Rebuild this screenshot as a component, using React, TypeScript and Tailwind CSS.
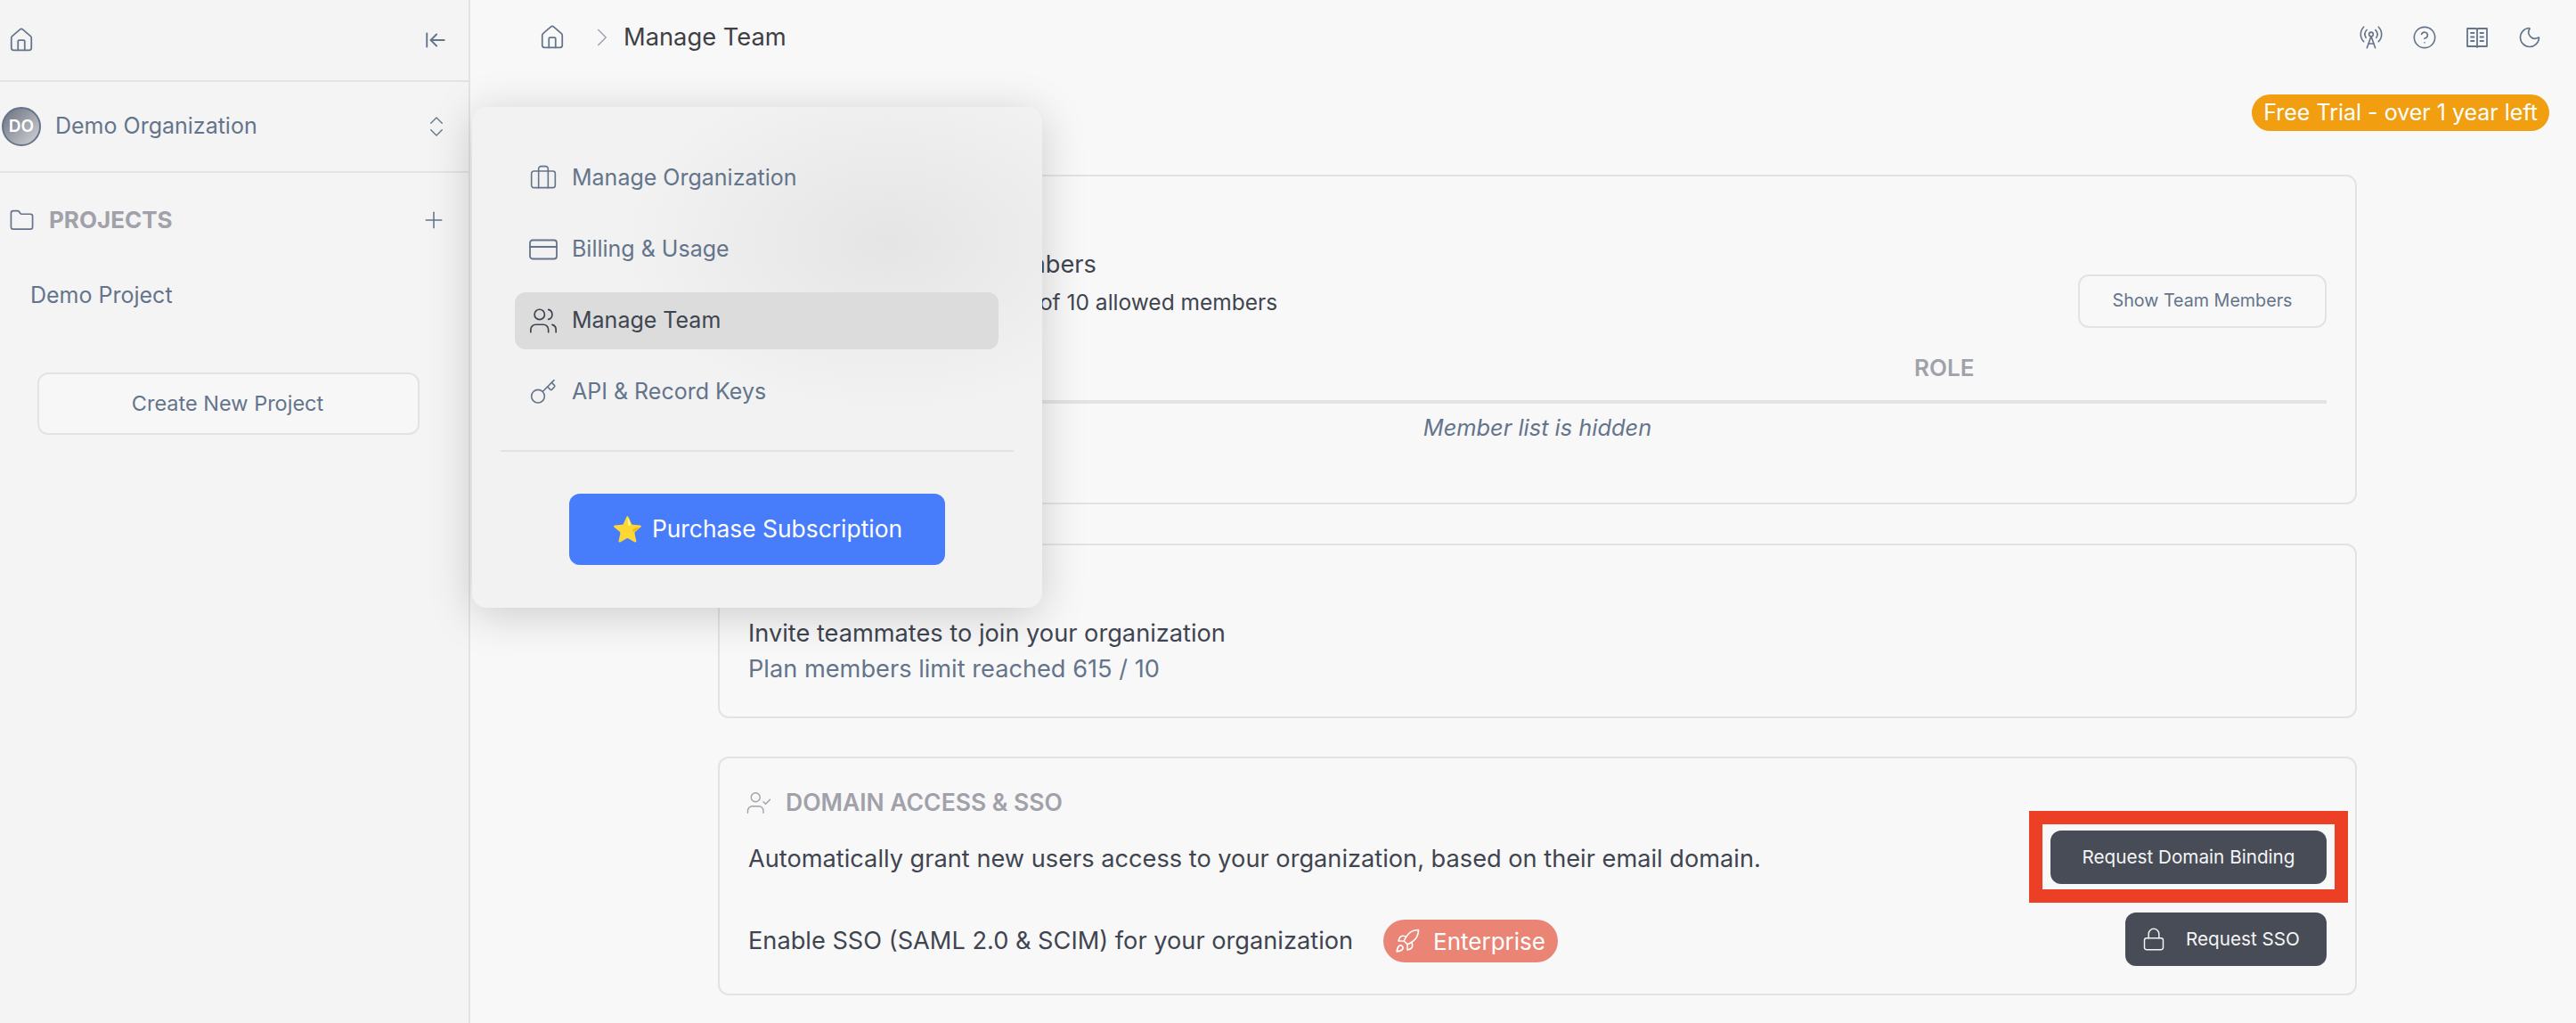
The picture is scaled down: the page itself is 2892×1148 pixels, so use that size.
import React from "react";
import {
  ArrowLeftToLine,
  Briefcase,
  ChevronRight,
  ChevronsUpDown,
  CircleHelp,
  CreditCard,
  Folder,
  Home,
  Key,
  Lock,
  Moon,
  Plus,
  RadioTower,
  Rocket,
  UserCheck,
  UserPlus,
  Users,
} from "lucide-react";

const menuItems = [
  { label: "Manage Organization", icon: Briefcase, size: 32 },
  { label: "Billing & Usage", icon: CreditCard, size: 36 },
  { label: "Manage Team", icon: Users, size: 34, active: true },
  { label: "API & Record Keys", icon: Key, size: 32 },
];

const Sidebar = () => (
  <aside className="flex h-full w-[528px] shrink-0 flex-col border-r-2 border-[#e3e3e4] bg-[#f4f4f5] text-[#64748b]">
    <div className="flex h-[92px] items-center justify-between border-b-2 border-[#e3e3e4] pl-[9px] pr-[24px]">
      <Home size={30} strokeWidth={1.4} />
      <ArrowLeftToLine size={26} strokeWidth={1.75} />
    </div>
    <div className="flex h-[102px] items-center border-b-2 border-[#e3e3e4] pl-[2px] pr-[21px]">
      <div className="flex h-[44px] w-[44px] items-center justify-center rounded-full border-2 border-[#64748b] bg-gradient-to-br from-[#6b7280] to-[#d4d4d8] text-[19px] font-semibold text-white">
        DO
      </div>
      <span className="ml-[16px] text-[25px]">Demo Organization</span>
      <ChevronsUpDown size={30} strokeWidth={1.1} className="ml-auto" />
    </div>
    <div className="flex items-center justify-between pl-[10px] pr-[24px] pt-[37px]">
      <div className="flex items-center gap-[16px]">
        <Folder size={29} strokeWidth={1.4} />
        <span className="text-[26px] font-bold leading-[32px] text-[#a1a1aa]">PROJECTS</span>
      </div>
      <Plus size={30} strokeWidth={1.25} />
    </div>
    <div className="pl-[34px] pt-[49px] text-[25px] leading-[38px]">Demo Project</div>
    <button className="ml-[42px] mt-[68px] h-[70px] w-[429px] rounded-[12px] border-2 border-[#e3e3e4] bg-[#f7f7f8] pr-[2px] text-[23.5px]">
      Create New Project
    </button>
  </aside>
);

const BookIcon = () => (
  <svg width="26" height="26" viewBox="0 0 26 26" fill="none" stroke="currentColor" strokeWidth="1.8" strokeLinecap="round" strokeLinejoin="round">
    <path d="M2 3h9.5c.8 0 1.5.6 1.5 1.4 0-.8.7-1.4 1.5-1.4H24v20h-9.5c-.8 0-1.5.4-1.5 1 0-.6-.7-1-1.5-1H2z" />
    <path d="M13 4.5V23" />
    <path d="M6 8h3.5M6 12.5h3.5M6 17h3.5M16.5 8H20M16.5 12.5H20M16.5 17H20" />
  </svg>
);

const TopBar = () => (
  <header className="flex h-[84px] items-center justify-between pl-[77px] pr-[38px]">
    <div className="flex items-center text-[#64748b]">
      <Home size={30} strokeWidth={1.4} />
      <ChevronRight size={34} strokeWidth={1} className="ml-[24px] text-[#9ca3af]" />
      <span className="ml-[7px] text-[27.3px] text-[#3f3f46]">Manage Team</span>
    </div>
    <div className="flex items-center gap-[32px] text-[#64748b]">
      <RadioTower size={28} strokeWidth={1.4} />
      <CircleHelp size={28} strokeWidth={1.4} />
      <BookIcon />
      <Moon size={28} strokeWidth={1.4} />
    </div>
  </header>
);

const Card = ({ className, children }: { className?: string; children: React.ReactNode }) => (
  <section className={`rounded-[12px] border-2 border-[#e3e3e4] px-[32px] ${className ?? ""}`}>{children}</section>
);

const CardTitle = ({ icon: Icon, children }: { icon: typeof Users; children: React.ReactNode }) => (
  <div className="flex h-[36px] items-center gap-[15px] text-[#a1a1aa]">
    <Icon size={30} strokeWidth={1.1} className="-ml-[3px]" />
    <span className="text-[26.5px] font-semibold">{children}</span>
  </div>
);

const DarkButton = ({ children, className }: { children: React.ReactNode; className?: string }) => (
  <button className={`flex h-[60px] shrink-0 items-center rounded-[12px] bg-[#474c57] text-[20.7px] text-[#f4f4f5] ${className ?? ""}`}>
    {children}
  </button>
);

const Main = () => (
  <main className="flex h-full min-w-0 flex-1 flex-col bg-[#f8f8f8]">
    <TopBar />
    <div className="flex justify-end pr-[30px] pt-[22px]">
      <span className="flex h-[41px] items-center rounded-full bg-[#f19e10] px-[13px] text-[25px] text-white">
        Free Trial - over 1 year left
      </span>
    </div>
    <div className="ml-[278px] mt-[49px] flex w-[1840px] flex-col gap-[44px]">
      <Card className="h-[370px] pt-[30px]">
        <CardTitle icon={Users}>TEAM MEMBERS</CardTitle>
        <div className="mt-[12px] flex items-end justify-between">
          <div className="pb-[8px] text-[#3f4550]">
            <p className="text-[27.2px] leading-[42px]">Manage your team's members</p>
            <p className="text-[24.5px] leading-[42px]">Your organization holds 615 of 10 allowed members</p>
          </div>
          <button className="h-[60px] w-[279px] rounded-[12px] border-2 border-[#e3e3e4] text-[19.7px] text-[#64748b]">
            Show Team Members
          </button>
        </div>
        <div className="flex h-[85px] items-center border-b-4 border-[#e3e3e4] pt-[7px] text-[26px] font-semibold text-[#a1a1aa]">
          <span className="w-[1309px]">USER</span>
          <span>ROLE</span>
        </div>
        <p className="pt-[2px] text-center text-[25.4px] leading-[50px] italic text-[#64748b]">Member list is hidden</p>
      </Card>
      <Card className="h-[196px] pt-[30px]">
        <CardTitle icon={UserPlus}>INVITE</CardTitle>
        <div className="mt-[13px] text-[27.2px] leading-[40px]">
          <p className="text-[#3f4550]">Invite teammates to join your organization</p>
          <p className="text-[#64748b]">Plan members limit reached 615 / 10</p>
        </div>
      </Card>
      <Card className="relative -mt-px h-[268px] pt-[32px]">
        <CardTitle icon={UserCheck}>DOMAIN ACCESS &amp; SSO</CardTitle>
        <div className="mt-[13px] flex items-center justify-between">
          <p className="pt-[4px] text-[27.2px] text-[#3f4550]">
            Automatically grant new users access to your organization, based on their email domain.
          </p>
          <DarkButton className="w-[310px] justify-center">Request Domain Binding</DarkButton>
        </div>
        <div className="mt-[32px] flex items-center justify-between">
          <div className="flex items-center pt-[4px]">
            <span className="text-[27.2px] text-[#3f4550]">Enable SSO (SAML 2.0 &amp; SCIM) for your organization</span>
            <span className="ml-[34px] flex h-[48px] items-center gap-[14px] rounded-full bg-[#ea8576] pl-[12px] pr-[14px] text-[26px] text-white">
              <Rocket size={30} strokeWidth={1.25} />
              Enterprise
            </span>
          </div>
          <DarkButton className="w-[226px] pl-[18px]">
            <Lock size={28} strokeWidth={1.25} />
            <span className="ml-[22px]">Request SSO</span>
          </DarkButton>
        </div>
        {/* annotation box from the screenshot */}
        <div className="pointer-events-none absolute left-[1470px] top-[59px] h-[103px] w-[358px] border-[15px] border-[#ec4026]" />
      </Card>
    </div>
  </main>
);

const Popover = () => (
  <div className="absolute left-[530px] top-[120px] h-[562px] w-[640px] rounded-[16px] bg-[#f1f1f1] bg-[radial-gradient(ellipse_300px_190px_at_73%_27%,#e5e5e5,#f2f2f2)] pt-[48px] shadow-[0_8px_50px_rgba(0,0,0,0.18)]">
    <ul className="flex flex-col gap-[16px] pl-[48px] pr-[49px]">
      {menuItems.map(({ label, icon: Icon, size, active }) => (
        <li
          key={label}
          className={`flex h-[64px] items-center gap-[14px] rounded-[12px] pl-[14px] text-[25px] ${active ? "bg-[#dcdcdc] text-[#3f4550]" : "text-[#64748b]"}`}
        >
          <span className="flex w-[36px] justify-center">
            <Icon size={size} strokeWidth={1.2} />
          </span>
          {label}
        </li>
      ))}
    </ul>
    <div className="mx-[32px] mt-[33px] border-t-2 border-[#e3e3e4]" />
    <button className="ml-[109px] mt-[47px] flex h-[80px] w-[422px] items-center justify-center gap-[10px] rounded-[12px] bg-[#477cfb] text-[26.4px] text-white">
      <span className="text-[28px]">⭐</span>
      Purchase Subscription
    </button>
  </div>
);

export default function App() {
  return (
    <div className="relative flex h-[1148px] w-[2892px] overflow-hidden font-['Inter',sans-serif]">
      <Sidebar />
      <Main />
      <Popover />
    </div>
  );
}
